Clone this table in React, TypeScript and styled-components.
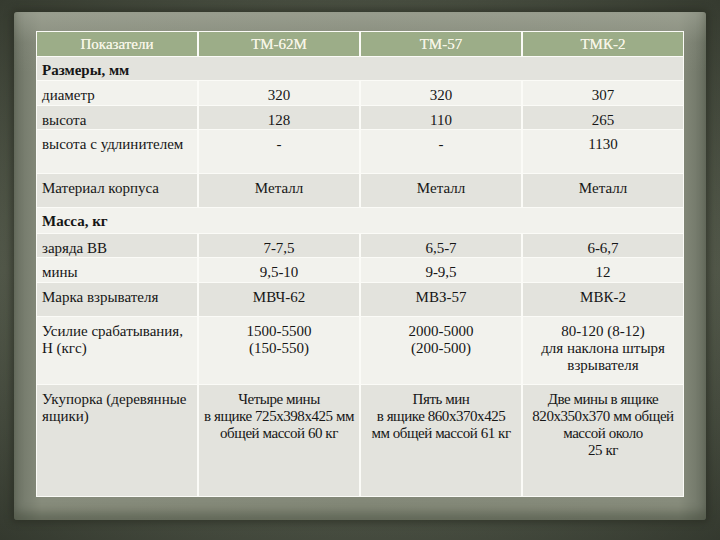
import React from "react";
import styled, { createGlobalStyle } from "styled-components";

const Global = createGlobalStyle`
  html, body { margin: 0; padding: 0; }
  body {
    background: #444a3d;
    font-family: "Liberation Serif", "DejaVu Serif", serif;
  }
`;

const Slide = styled.div`
  width: 720px;
  height: 540px;
  box-sizing: border-box;
  padding: 12px 14px 20px 14px;
  background:
    radial-gradient(ellipse at 50% 50%, rgba(90, 96, 80, 0) 60%, rgba(30, 34, 26, 0.5) 100%),
    linear-gradient(180deg, #4d5345 0%, #585e4f 50%, #4a5043 100%);
  display: flex;
`;

const Paper = styled.div`
  flex: 1;
  box-sizing: border-box;
  padding: 19px 22px 23px 22px;
  border-radius: 3px;
  background:
    linear-gradient(180deg, rgba(170, 174, 160, 0.55) 0%, rgba(150, 155, 140, 0.15) 6%, rgba(0, 0, 0, 0) 12%),
    linear-gradient(90deg, #6e7466 0%, #878c7c 4%, #838878 50%, #878c7c 96%, #6c7264 100%);
  box-shadow: 0 0 6px 3px rgba(40, 44, 34, 0.6), inset 0 -8px 10px rgba(60, 66, 52, 0.45);
`;

const Grid = styled.div`
  display: grid;
  grid-template-columns: repeat(4, 1fr);
  grid-template-rows: 24px 23px 24px 23px 43px 33px 25px 23px 24px 33px 67px 111px;
  column-gap: 2px;
  row-gap: 1px;
  background: #fbfbf7;
  border: 1px solid #fbfbf7;
  height: 466px;
  box-sizing: border-box;
  font-family: "Liberation Serif", "DejaVu Serif", serif;
  font-size: 15px;
  line-height: 17px;
  color: #161616;
`;

const HeaderCell = styled.div`
  background: #9cad88;
  color: #f6f5e6;
  display: flex;
  align-items: center;
  justify-content: center;
  font-size: 15px;
  padding-top: 1px;
  box-sizing: border-box;
  text-shadow: 0 0 0.4px #f6f5e6;
`;

const Cell = styled.div<{ $dark?: boolean; $center?: boolean; $tight?: boolean }>`
  background: ${(p) => (p.$dark ? "#e3e3dd" : "#f2f2ed")};
  text-align: ${(p) => (p.$center ? "center" : "left")};
  letter-spacing: ${(p) => (p.$tight ? "-0.45px" : "normal")};
  padding: 6px 5px 0 5px;
  box-sizing: border-box;
  overflow: hidden;
`;

const Section = styled(Cell)`
  grid-column: 1 / span 4;
  font-weight: bold;
  padding-top: 5px;
`;

const Line = styled.span`
  display: block;
  white-space: nowrap;
`;

type Row = { label: React.ReactNode; values: React.ReactNode[]; tight?: boolean };

const lines = (...t: string[]) => t.map((s, i) => <Line key={i}>{s}</Line>);

const rows1: Row[] = [
  { label: "диаметр", values: ["320", "320", "307"] },
  { label: "высота", values: ["128", "110", "265"] },
  { label: "высота с удлинителем", values: ["-", "-", "1130"] },
  { label: "Материал корпуса", values: ["Металл", "Металл", "Металл"] },
];

const rows2: Row[] = [
  { label: "заряда ВВ", values: ["7-7,5", "6,5-7", "6-6,7"] },
  { label: "мины", values: ["9,5-10", "9-9,5", "12"] },
  { label: "Марка взрывателя", values: ["МВЧ-62", "МВЗ-57", "МВК-2"] },
  {
    label: "Усилие срабатывания, Н (кгс)",
    values: [
      lines("1500-5500", "(150-550)"),
      lines("2000-5000", "(200-500)"),
      lines("80-120 (8-12)", "для наклона штыря", "взрывателя"),
    ],
  },
  {
    label: "Укупорка (деревянные ящики)",
    tight: true,
    values: [
      lines("Четыре мины", "в ящике 725х398х425 мм", "общей массой 60 кг"),
      lines("Пять мин", "в ящике 860х370х425", "мм общей массой 61 кг"),
      lines("Две мины  в ящике", "820х350х370 мм общей", "массой около", "25 кг"),
    ],
  },
];

const renderRows = (rows: Row[], startDark: boolean) =>
  rows.map((r, i) => {
    const dark = (i % 2 === 0) === startDark;
    return (
      <React.Fragment key={i}>
        <Cell $dark={dark}>{r.label}</Cell>
        {r.values.map((v, j) => (
          <Cell key={j} $dark={dark} $center $tight={r.tight}>
            {v}
          </Cell>
        ))}
      </React.Fragment>
    );
  });

export default function App() {
  return (
    <>
      <Global />
      <Slide>
        <Paper>
          <Grid>
            <HeaderCell>Показатели</HeaderCell>
            <HeaderCell>ТМ-62М</HeaderCell>
            <HeaderCell>ТМ-57</HeaderCell>
            <HeaderCell>ТМК-2</HeaderCell>
            <Section $dark>Размеры, мм</Section>
            {renderRows(rows1, false)}
            <Section>Масса, кг</Section>
            {renderRows(rows2, true)}
          </Grid>
        </Paper>
      </Slide>
    </>
  );
}
